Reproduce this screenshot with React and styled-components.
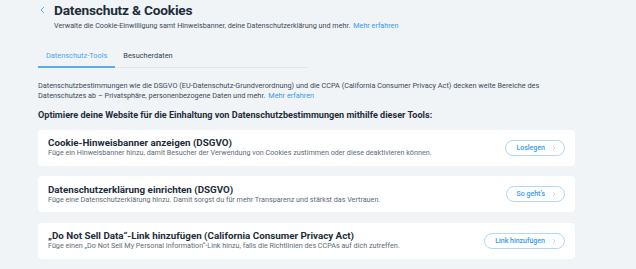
import React from 'react';
import styled, { createGlobalStyle } from 'styled-components';

const GlobalStyle = createGlobalStyle`
  html, body {
    margin: 0;
    padding: 0;
    background: #f0f4f7;
    font-family: "Roboto", "Noto Sans", sans-serif;
    color: #20303c;
  }
`;

const Page = styled.div`
  width: 636px;
  height: 269px;
  overflow: hidden;
  padding: 0 61px 0 38px;
  box-sizing: border-box;
`;

const Header = styled.div`
  display: flex;
  align-items: flex-start;
  gap: 9px;
  padding-top: 1px;
`;

const Back = styled.span`
  display: flex;
  align-items: center;
  height: 18px;
  padding-left: 2px;
`;

const TitleBlock = styled.div`
  display: flex;
  flex-direction: column;
`;

const Title = styled.h1`
  margin: 0;
  font-size: 13.7px;
  line-height: 18px;
  font-weight: 700;
  letter-spacing: -0.2px;
  color: #1d2d3a;
`;

const Subtitle = styled.p`
  margin: 1px 0 0;
  font-size: 7.2px;
  line-height: 11px;
  color: #3b4a57;
`;

const Link = styled.a`
  display: inline-block;
  color: #3899ec;
  text-decoration: none;
  margin-left: 3px;
`;

const Tabs = styled.div`
  display: flex;
  width: 270px;
  margin-top: 19px;
  border-bottom: 1px solid #e0e6ec;
`;

const Tab = styled.div`
  padding: 0 8px 7px;
  font-size: 7.4px;
  line-height: 11px;
  color: ${(p) => (p.$active ? '#4aa3f0' : '#32434f')};
  box-shadow: ${(p) => (p.$active ? 'inset 0 -2px 0 #5aacf2' : 'none')};
  margin-bottom: -1px;
`;

const Intro = styled.p`
  margin: 13px 0 0;
  font-size: 7.3px;
  line-height: 10px;
  color: #3b4a57;
  width: 505px;
`;

const Heading = styled.h2`
  margin: 9px 0 0;
  font-size: 9.1px;
  line-height: 11px;
  font-weight: 700;
  color: #1d2d3a;
`;

const Cards = styled.div`
  display: flex;
  flex-direction: column;
  gap: 10.5px;
  margin-top: 8.5px;
`;

const Card = styled.div`
  display: flex;
  align-items: center;
  justify-content: space-between;
  height: 36px;
  padding: 0 10px;
  background: #fff;
  border-radius: 4px;
  box-sizing: border-box;
`;

const CardText = styled.div`
  display: flex;
  flex-direction: column;
`;

const CardTitle = styled.div`
  font-size: 9.8px;
  line-height: 11px;
  font-weight: 700;
  color: #1d2d3a;
`;

const CardDesc = styled.div`
  font-size: 7.2px;
  line-height: 10px;
  color: #5d6b77;
`;

const Button = styled.button`
  display: flex;
  align-items: center;
  gap: 7px;
  height: 16px;
  padding: 0 8px 0 10px;
  border: 1px solid #b3d7f7;
  border-radius: 8px;
  background: #fff;
  color: #3899ec;
  font-family: inherit;
  font-size: 7px;
  font-weight: 500;
  cursor: pointer;
`;

const Chevron = () => (
  <svg width="4" height="6" viewBox="0 0 4 6" fill="none">
    <path d="M1 1l2 2-2 2" stroke="#a9cdf0" strokeWidth="0.8" />
  </svg>
);

const BackIcon = () => (
  <svg width="5" height="8" viewBox="0 0 5 8" fill="none">
    <path d="M4 1L1 4l3 3" stroke="#5aacf2" strokeWidth="1" />
  </svg>
);

const tools = [
  {
    title: 'Cookie-Hinweisbanner anzeigen (DSGVO)',
    desc: 'Füge ein Hinweisbanner hinzu, damit Besucher der Verwendung von Cookies zustimmen oder diese deaktivieren können.',
    action: 'Loslegen',
  },
  {
    title: 'Datenschutzerklärung einrichten (DSGVO)',
    desc: 'Füge eine Datenschutzerklärung hinzu. Damit sorgst du für mehr Transparenz und stärkst das Vertrauen.',
    action: 'So geht’s',
  },
  {
    title: '„Do Not Sell Data“-Link hinzufügen (California Consumer Privacy Act)',
    desc: 'Füge einen „Do Not Sell My Personal Information“-Link hinzu, falls die Richtlinien des CCPAs auf dich zutreffen.',
    action: 'Link hinzufügen',
  },
];

export default function App() {
  return (
    <>
      <GlobalStyle />
      <Page>
        <Header>
          <Back>
            <BackIcon />
          </Back>
          <TitleBlock>
            <Title>Datenschutz &amp; Cookies</Title>
            <Subtitle>
              Verwalte die Cookie-Einwilligung samt Hinweisbanner, deine Datenschutzerklärung und mehr.
              <Link href="#">Mehr erfahren</Link>
            </Subtitle>
          </TitleBlock>
        </Header>
        <Tabs>
          <Tab $active>Datenschutz-Tools</Tab>
          <Tab>Besucherdaten</Tab>
        </Tabs>
        <Intro>
          Datenschutzbestimmungen wie die DSGVO (EU-Datenschutz-Grundverordnung) und die CCPA (California Consumer
          Privacy Act) decken weite Bereiche des Datenschutzes ab – Privatsphäre, personenbezogene Daten und mehr.
          <Link href="#">Mehr erfahren</Link>
        </Intro>
        <Heading>Optimiere deine Website für die Einhaltung von Datenschutzbestimmungen mithilfe dieser Tools:</Heading>
        <Cards>
          {tools.map((t) => (
            <Card key={t.action}>
              <CardText>
                <CardTitle>{t.title}</CardTitle>
                <CardDesc>{t.desc}</CardDesc>
              </CardText>
              <Button>
                {t.action}
                <Chevron />
              </Button>
            </Card>
          ))}
        </Cards>
      </Page>
    </>
  );
}
